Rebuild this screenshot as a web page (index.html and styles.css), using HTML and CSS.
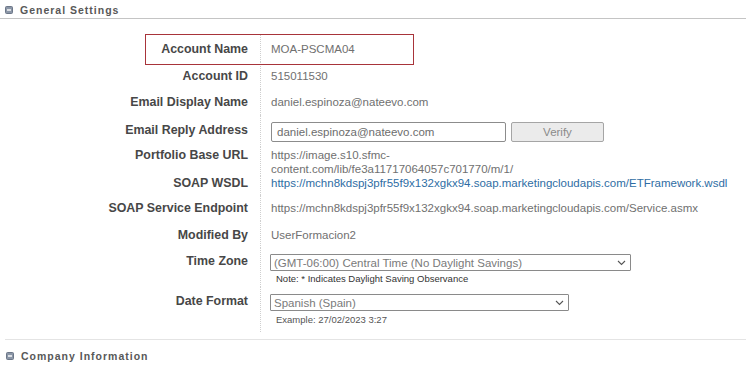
FILE: index.html
```html
<!DOCTYPE html>
<html lang="en">

<head>
    <meta charset="utf-8">
    <meta name="viewport" content="width=device-width, initial-scale=1.0">
    <title>Account Settings</title>

    <link rel="stylesheet" href="styles.css">
</head>

<body>

    <div class="section">
        <div class="section-head">
            <svg class="toggle" width="8" height="8" viewBox="0 0 8 8"><rect x="0.5" y="0.5" width="7" height="7" rx="1" fill="#8b96a7" stroke="#6c7788"/><line x1="2" y1="4" x2="6" y2="4" stroke="#ffffff" stroke-width="1.4"/></svg>
            <span>General Settings</span>
        </div>

        <div class="settings">
            <div class="highlight"></div>

            <div class="row r-name">
                <div class="label">Account Name</div>
                <div class="value">MOA-PSCMA04</div>
            </div>
            <div class="row r-id">
                <div class="label">Account ID</div>
                <div class="value">515011530</div>
            </div>
            <div class="row">
                <div class="label">Email Display Name</div>
                <div class="value">daniel.espinoza@nateevo.com</div>
            </div>
            <div class="row r-reply">
                <div class="label">Email Reply Address</div>
                <div class="value">
                    <input class="textbox" type="text" value="daniel.espinoza@nateevo.com">
                    <button class="verify">Verify</button>
                </div>
            </div>
            <div class="row r-portfolio">
                <div class="label">Portfolio Base URL</div>
                <div class="value"><span class="wrap">https://image.s10.sfmc-content.com/lib/fe3a11717064057c701770/m/1/</span></div>
            </div>
            <div class="row r-wsdl">
                <div class="label">SOAP WSDL</div>
                <div class="value"><a href="#">https://mchn8kdspj3pfr55f9x132xgkx94.soap.marketingcloudapis.com/ETFramework.wsdl</a></div>
            </div>
            <div class="row">
                <div class="label">SOAP Service Endpoint</div>
                <div class="value">https://mchn8kdspj3pfr55f9x132xgkx94.soap.marketingcloudapis.com/Service.asmx</div>
            </div>
            <div class="row r-mod">
                <div class="label">Modified By</div>
                <div class="value">UserFormacion2</div>
            </div>
            <div class="row r-zone">
                <div class="label">Time Zone</div>
                <div class="value">
                    <div class="dropdown zone">
                        <select>
                            <option>(GMT-06:00) Central Time (No Daylight Savings)</option>
                        </select>
                        <svg class="chevron" width="9" height="6" viewBox="0 0 9 6"><polyline points="1,1 4.5,4.5 8,1" fill="none" stroke="#555" stroke-width="1.1"/></svg>
                    </div>
                    <div class="hint">Note: * Indicates Daylight Saving Observance</div>
                </div>
            </div>
            <div class="row r-date">
                <div class="label">Date Format</div>
                <div class="value">
                    <div class="dropdown date">
                        <select>
                            <option>Spanish (Spain)</option>
                        </select>
                        <svg class="chevron" width="9" height="6" viewBox="0 0 9 6"><polyline points="1,1 4.5,4.5 8,1" fill="none" stroke="#555" stroke-width="1.1"/></svg>
                    </div>
                    <div class="hint example">Example: 27/02/2023 3:27</div>
                </div>
            </div>
        </div>
    </div>

    <div class="section next">
        <div class="section-head plain">
            <svg class="toggle" width="8" height="8" viewBox="0 0 8 8"><rect x="0.5" y="0.5" width="7" height="7" rx="1" fill="#8b96a7" stroke="#6c7788"/><line x1="2" y1="4" x2="6" y2="4" stroke="#ffffff" stroke-width="1.4"/></svg>
            <span>Company Information</span>
        </div>
    </div>

</body>

</html>
```

FILE: styles.css
```css
body {
    margin: 0;
    background-color: white;
    font-family: "Liberation Sans", Arial, sans-serif;
}

.section-head {
    display: flex;
    align-items: center;
    gap: 7px;
    height: 16px;
    padding-top: 2px;
    padding-left: 5px;
    border-bottom: 1px solid #c4c4c4;

    font-size: 10.5px;
    font-weight: 700;
    letter-spacing: 1px;
    color: #585858;
}

.section-head.plain {
    border-bottom: none;
    padding-top: 8px;
}

.toggle {
    flex-shrink: 0;
}

.next {
    margin-top: 7px;
    margin-left: 5px;
    border-top: 1px solid #e4e4e4;
}

.next .section-head {
    padding-left: 1px;
}

.settings {
    position: relative;
    margin-top: 16px;
}

/* red frame round the first row */
.highlight {
    position: absolute;
    left: 145px;
    top: -1px;
    width: 267px;
    height: 29px;
    border: 1px solid #a8343a;
}

.row {
    display: grid;
    grid-template-columns: 260px 1fr;
}

.row > div {
    padding-top: 6px;
    padding-bottom: 6px;
    line-height: 14px;
}

.label {
    padding-right: 12px;
    text-align: right;
    font-size: 12.4px;
    font-weight: 700;
    color: #474747;
}

.value {
    padding-left: 10px;
    border-left: 1px dotted #cfcfcf;
    font-size: 11.5px;
    color: #707070;
}

.value a {
    color: #2e6da4;
    text-decoration: none;
}

.r-name > div {
    padding-top: 7px;
}

.r-id > div,
.r-mod > div {
    padding-top: 7px;
}

.r-reply > .label {
    padding-top: 8px;
    padding-bottom: 0;
}

.r-reply > .value {
    display: flex;
    align-items: flex-start;
    padding-top: 7px;
    padding-bottom: 5px;
}

.textbox {
    box-sizing: border-box;
    width: 235px;
    height: 20px;
    margin: 0;
    padding: 0 5px;
    border: 1px solid #8c8c8c;
    border-radius: 2px;
    font-family: "Liberation Sans", Arial, sans-serif;
    font-size: 11.5px;
    color: #6d6d6d;
}

.verify {
    box-sizing: border-box;
    width: 93px;
    height: 20px;
    margin: 0 0 0 5px;
    border: 1px solid #a5a5a5;
    border-radius: 2px;
    background-color: #ebebeb;
    font-family: "Liberation Sans", Arial, sans-serif;
    font-size: 11.5px;
    color: #8a8a8a;
}

.r-portfolio > div {
    padding-top: 1px;
    padding-bottom: 0;
}

.wrap {
    display: block;
    max-width: 245px;
}

.r-wsdl > div {
    padding-top: 0;
    padding-bottom: 5px;
}

.r-zone > div {
    padding-top: 6px;
    padding-bottom: 2px;
}

.r-date > .label {
    padding-top: 7px;
}

.r-date > .value {
    padding-top: 7px;
    padding-bottom: 6px;
}

.dropdown {
    position: relative;
    margin-left: -1px;
}

.dropdown select {
    display: block;
    box-sizing: border-box;
    height: 17px;
    margin: 0;
    padding: 0 3px;
    border: 1px solid #8a8a8a;
    border-radius: 1px;
    background-color: white;
    appearance: none;
    -webkit-appearance: none;
    font-family: "Liberation Sans", Arial, sans-serif;
    font-size: 11.5px;
    color: #7a7a7a;
}

.zone select {
    width: 361px;
}

.date select {
    width: 299px;
}

.dropdown .chevron {
    position: absolute;
    top: 6px;
}

.zone .chevron {
    left: 347px;
}

.date .chevron {
    left: 285px;
}

.hint {
    margin-top: 1px;
    padding-left: 5px;
    font-size: 9.5px;
    line-height: 13px;
    color: #333333;
}

.example {
    margin-top: 2px;
    color: #555555;
}
```
